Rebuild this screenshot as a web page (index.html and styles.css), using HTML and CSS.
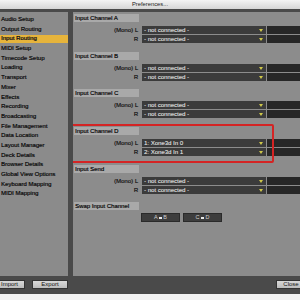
FILE: index.html
```html
<!DOCTYPE html>
<html lang="en">
<head>
  <meta charset="UTF-8">
  <title>Preferences...</title>
  <link rel="stylesheet" href="styles.css">
</head>
<body>

  <!-- Title Bar -->
  <div class="titlebar">Preferences...</div>

  <div class="window">
    <div class="main">

      <!-- Category List -->
      <ul class="sidebar">
        <li>Audio Setup</li>
        <li>Output Routing</li>
        <li class="active">Input Routing</li>
        <li>MIDI Setup</li>
        <li>Timecode Setup</li>
        <li>Loading</li>
        <li>Transport</li>
        <li>Mixer</li>
        <li>Effects</li>
        <li>Recording</li>
        <li>Broadcasting</li>
        <li>File Management</li>
        <li>Data Location</li>
        <li>Layout Manager</li>
        <li>Deck Details</li>
        <li>Browser Details</li>
        <li>Global View Options</li>
        <li>Keyboard Mapping</li>
        <li>MIDI Mapping</li>
      </ul>

      <!-- Input Routing Panel -->
      <div class="panel">
        <div class="section">
          <div class="sec-head">Input Channel A</div>
          <div class="row"><span class="label">(Mono) L</span><div class="select">- not connected -<span class="arrow"></span></div><div class="extra"></div></div>
          <div class="row"><span class="label">R</span><div class="select">- not connected -<span class="arrow"></span></div><div class="extra"></div></div>
        </div>
        <div class="section">
          <div class="sec-head">Input Channel B</div>
          <div class="row"><span class="label">(Mono) L</span><div class="select">- not connected -<span class="arrow"></span></div><div class="extra"></div></div>
          <div class="row"><span class="label">R</span><div class="select">- not connected -<span class="arrow"></span></div><div class="extra"></div></div>
        </div>
        <div class="section">
          <div class="sec-head">Input Channel C</div>
          <div class="row"><span class="label">(Mono) L</span><div class="select">- not connected -<span class="arrow"></span></div><div class="extra"></div></div>
          <div class="row"><span class="label">R</span><div class="select">- not connected -<span class="arrow"></span></div><div class="extra"></div></div>
        </div>
        <div class="section marked">
          <div class="sec-head">Input Channel D</div>
          <div class="row"><span class="label">(Mono) L</span><div class="select">1: Xone3d In 0<span class="arrow"></span></div><div class="extra"></div></div>
          <div class="row"><span class="label">R</span><div class="select">2: Xone3d In 1<span class="arrow"></span></div><div class="extra"></div></div>
        </div>
        <div class="section">
          <div class="sec-head">Input Send</div>
          <div class="row"><span class="label">(Mono) L</span><div class="select">- not connected -<span class="arrow"></span></div><div class="extra"></div></div>
          <div class="row"><span class="label">R</span><div class="select">- not connected -<span class="arrow"></span></div><div class="extra"></div></div>
        </div>
        <div class="section">
          <div class="sec-head">Swap Input Channel</div>
          <div class="swap-row">
            <button class="swap-btn">A <span class="dot"></span> B</button>
            <button class="swap-btn">C <span class="dot"></span> D</button>
          </div>
        </div>
      </div>
    </div>

    <!-- Bottom Buttons -->
    <div class="bottombar">
      <div class="left-btns">
        <button class="btn btn-import">Import</button>
        <button class="btn btn-export">Export</button>
      </div>
      <button class="btn btn-close">Close</button>
    </div>
  </div>

</body>
</html>
```

FILE: styles.css
```css
body {
  margin: 0;
  width: 300px;
  height: 300px;
  overflow: hidden;
  background: #f2f2f2;
  font-family: 'Liberation Sans', Arial, sans-serif;
  font-size: 6px;
  color: #111;
}

/* Title bar */
.titlebar {
  height: 9px;
  line-height: 9px;
  text-align: center;
  font-size: 5.8px;
  color: #222;
  background: linear-gradient(#f4f4f4, #d6d6d6);
}

.window {
  background-color: #4a4a4a;
  padding-top: 3px;
  height: 282px;
}

.main {
  display: flex;
  height: 264px;
}

/* Sidebar */
.sidebar {
  list-style: none;
  margin: 0;
  padding: 4px 0 0 0;
  width: 68px;
  background-color: #8b8b8b;
  overflow: hidden;
}

.sidebar li {
  height: 7.7px;
  line-height: 7.7px;
  margin-bottom: 2px;
  padding-left: 1px;
  white-space: nowrap;
  color: #0c0c0c;
  text-shadow: 0.3px 0 0 #2a2a2a;
}

.sidebar li.active {
  background-color: #e6b43c;
}

/* Panel */
.panel {
  margin-left: 5px;
  flex: 1;
  background-color: #8c8c8c;
  padding-top: 2px;
  overflow: hidden;
}

.section {
  margin-bottom: 8.7px;
}

.sec-head {
  width: 64px;
  height: 8px;
  line-height: 8px;
  margin-left: 1px;
  padding-left: 1px;
  margin-bottom: 4px;
  background-color: #a9a9a9;
  white-space: nowrap;
  text-shadow: 0.3px 0 0 #2a2a2a;
}

.row {
  display: flex;
  height: 8px;
  margin-bottom: 1px;
}

.label {
  width: 65px;
  text-align: right;
  line-height: 8px;
  color: #1a1a1a;
  white-space: nowrap;
  text-shadow: 0.3px 0 0 #333;
}

.select {
  position: relative;
  margin-left: 4px;
  width: 122px;
  padding-left: 2px;
  line-height: 8px;
  background-color: #3b3b3b;
  color: #d8d8d8;
  white-space: nowrap;
  text-shadow: 0.3px 0 0 #aaa;
}

.arrow {
  position: absolute;
  right: 3px;
  top: 3px;
  width: 0;
  height: 0;
  border-left: 2px solid transparent;
  border-right: 2px solid transparent;
  border-top: 3px solid #cfc84a;
}

.extra {
  flex: 1;
  margin-left: 1px;
  background-color: #272727;
}

/* Red annotation box */
.marked {
  position: relative;
}

.marked::after {
  content: '';
  position: absolute;
  left: -2px;
  top: -3px;
  width: 199px;
  height: 35px;
  border: 2px solid #d42424;
  border-radius: 2px;
}

/* Swap buttons */
.swap-row {
  display: flex;
  gap: 3px;
  margin-left: 68px;
  margin-top: -1px;
}

.swap-btn {
  width: 39px;
  height: 9px;
  padding: 0;
  border: 1px solid #2a2a2a;
  background-color: #3d3d3d;
  color: #cfcfcf;
  font-family: inherit;
  font-size: 5.5px;
  line-height: 7px;
}

.dot {
  display: inline-block;
  width: 3px;
  height: 2px;
  background-color: #e8e8e8;
  vertical-align: middle;
}

/* Bottom bar */
.bottombar {
  display: flex;
  justify-content: space-between;
  padding-top: 4px;
  overflow: hidden;
}

.left-btns {
  display: flex;
  gap: 7px;
  margin-left: -6px;
}

.btn {
  height: 9px;
  padding: 0;
  border: 1px solid #333;
  background: linear-gradient(#d8d8d8, #bdbdbd);
  color: #111;
  font-family: inherit;
  font-size: 6px;
  line-height: 7px;
}

.btn-import {
  width: 31px;
}

.btn-export {
  width: 36px;
}

.btn-close {
  width: 30px;
  margin-right: -6px;
}
```
